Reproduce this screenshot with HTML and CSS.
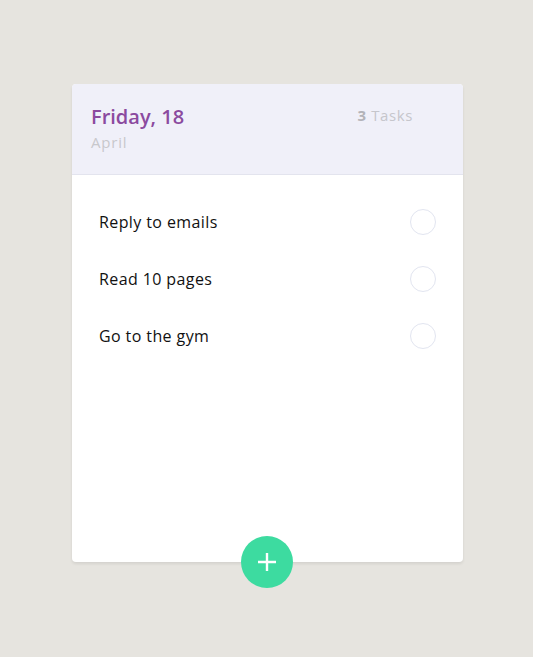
FILE: index.html
```html
<!DOCTYPE html>
<html>
<head>
<meta charset="utf-8">
<link rel="stylesheet" href="styles.css">
</head>
<body>
<div class="card">
  <div class="header">
    <div class="date">
      <div class="day">Friday, 18</div>
      <div class="month">April</div>
    </div>
    <div class="count"><b>3</b> Tasks</div>
  </div>
  <ul class="tasks">
    <li class="task"><span>Reply to emails</span><span class="check"></span></li>
    <li class="task"><span>Read 10 pages</span><span class="check"></span></li>
    <li class="task"><span>Go to the gym</span><span class="check"></span></li>
  </ul>
  <button class="fab" aria-label="Add task">
    <svg width="20" height="20" viewBox="0 0 20 20"><path d="M10 1v18M1 10h18" stroke="#fff" stroke-width="2.4" fill="none"/></svg>
  </button>
</div>
</body>
</html>
```
FILE: styles.css
```css
html, body { margin: 0; padding: 0; }
body {
  background: #e6e4df;
  font-family: "Open Sans", "Noto Sans", sans-serif;
  padding-top: 84px;
  height: 573px;
}
.card {
  position: relative;
  width: 391px;
  height: 478px;
  margin: 0 0 0 72px;
  background: #fff;
  border-radius: 4px;
  box-shadow: 0 2px 3px rgba(0,0,0,0.08);
}
.header {
  height: 91px;
  box-sizing: border-box;
  background: #f0f0f9;
  border-bottom: 1px solid #e3e4ee;
  border-radius: 4px 4px 0 0;
  display: flex;
  justify-content: space-between;
  align-items: flex-start;
  padding: 20px 50px 0 19px;
}
.day {
  color: #8b4a9f;
  font-weight: 600;
  font-size: 20px;
  line-height: 26px;
}
.month {
  color: #c8c8cc;
  font-size: 15px;
  line-height: 24px;
  letter-spacing: 0.8px;
}
.count {
  color: #c6c6cc;
  font-size: 15px;
  line-height: 22px;
  letter-spacing: 0.6px;
}
.count b { color: #b3b3b8; }
.tasks {
  list-style: none;
  margin: 0;
  padding: 18px 27px 0 27px;
}
.task {
  height: 57px;
  display: flex;
  align-items: center;
  justify-content: space-between;
  font-size: 16px;
  letter-spacing: 0.4px;
  color: #111;
}
.check {
  width: 24px;
  height: 24px;
  border: 1px solid #e2e5f0;
  border-radius: 50%;
}
.fab {
  position: absolute;
  left: 169px;
  bottom: -26px;
  width: 52px;
  height: 52px;
  border: none;
  border-radius: 50%;
  background: #3ddba0;
  display: flex;
  align-items: center;
  justify-content: center;
  padding: 0;
}
```
